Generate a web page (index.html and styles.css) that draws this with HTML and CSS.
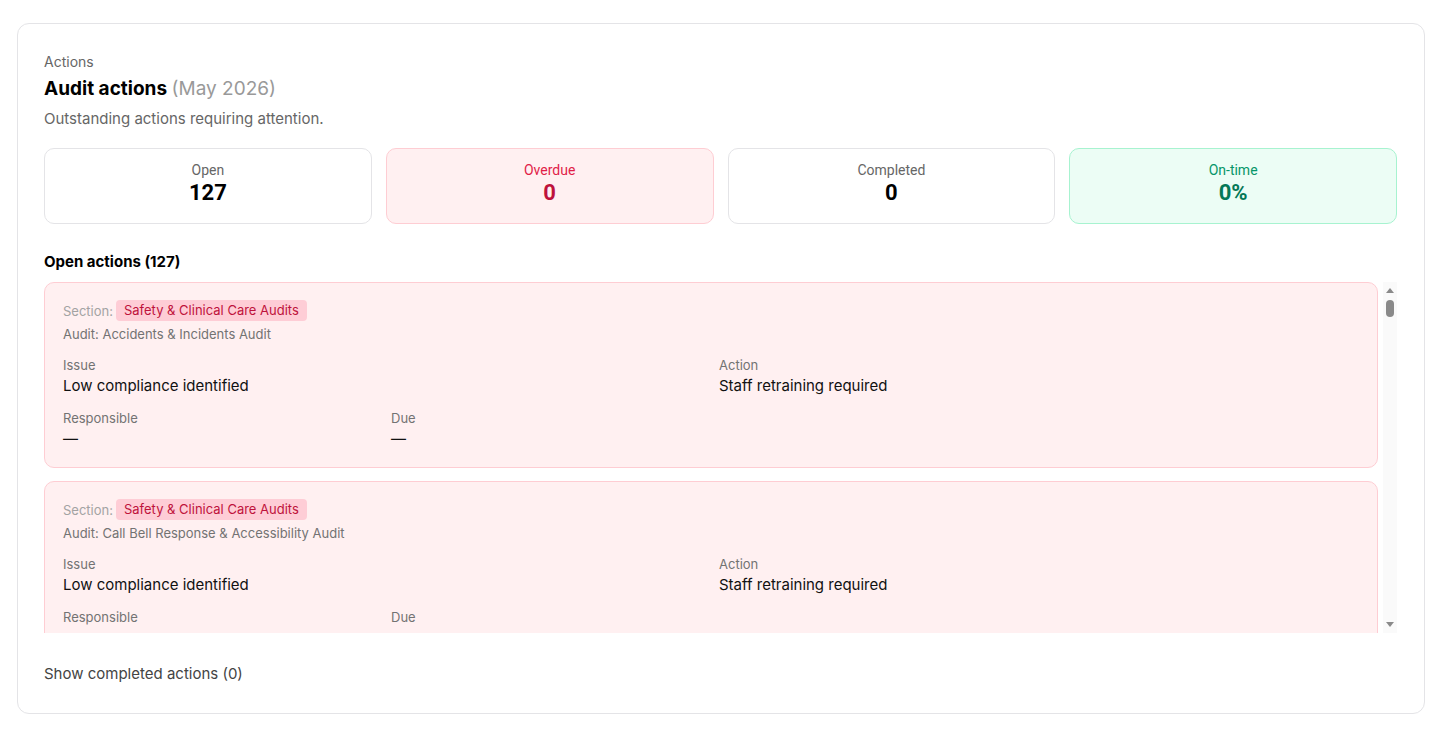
FILE: index.html
```html
<!DOCTYPE html>
<html lang="en">

<head>
    <meta charset="UTF-8">
    <meta name="viewport" content="width=device-width, initial-scale=1.0">
    <title>Audit actions</title>
    <link rel="stylesheet" href="styles.css">
</head>

<body>
    <div class="card">
        <div class="eyebrow">Actions</div>
        <h2 class="title">Audit actions <span class="period">(May 2026)</span></h2>
        <p class="subtitle">Outstanding actions requiring attention.</p>

        <div class="stats">
            <div class="stat">
                <div class="stat-label">Open</div>
                <div class="stat-value">127</div>
            </div>
            <div class="stat overdue">
                <div class="stat-label">Overdue</div>
                <div class="stat-value">0</div>
            </div>
            <div class="stat">
                <div class="stat-label">Completed</div>
                <div class="stat-value">0</div>
            </div>
            <div class="stat ontime">
                <div class="stat-label">On-time</div>
                <div class="stat-value">0%</div>
            </div>
        </div>

        <h3 class="list-title">Open actions (127)</h3>

        <div class="list-wrap">
            <div class="list">
                <div class="item">
                    <div class="section-row">
                        <span class="muted">Section:</span>
                        <span class="badge">Safety &amp; Clinical Care Audits</span>
                    </div>
                    <div class="audit">Audit: Accidents &amp; Incidents Audit</div>
                    <div class="grid-2">
                        <div>
                            <div class="field-label">Issue</div>
                            <div class="field-value">Low compliance identified</div>
                        </div>
                        <div>
                            <div class="field-label">Action</div>
                            <div class="field-value">Staff retraining required</div>
                        </div>
                    </div>
                    <div class="grid-4">
                        <div>
                            <div class="field-label">Responsible</div>
                            <div class="field-value">—</div>
                        </div>
                        <div>
                            <div class="field-label">Due</div>
                            <div class="field-value">—</div>
                        </div>
                    </div>
                </div>

                <div class="item">
                    <div class="section-row">
                        <span class="muted">Section:</span>
                        <span class="badge">Safety &amp; Clinical Care Audits</span>
                    </div>
                    <div class="audit">Audit: Call Bell Response &amp; Accessibility Audit</div>
                    <div class="grid-2">
                        <div>
                            <div class="field-label">Issue</div>
                            <div class="field-value">Low compliance identified</div>
                        </div>
                        <div>
                            <div class="field-label">Action</div>
                            <div class="field-value">Staff retraining required</div>
                        </div>
                    </div>
                    <div class="grid-4">
                        <div>
                            <div class="field-label">Responsible</div>
                            <div class="field-value">—</div>
                        </div>
                        <div>
                            <div class="field-label">Due</div>
                            <div class="field-value">—</div>
                        </div>
                    </div>
                </div>
            </div>

            <!-- scrollbar for the action list -->
            <div class="scrollbar">
                <span class="arrow up"></span>
                <span class="thumb"></span>
                <span class="spacer"></span>
                <span class="arrow down"></span>
            </div>
        </div>

        <button class="toggle">Show completed actions (0)</button>
    </div>
</body>

</html>
```

FILE: styles.css
```css
body {
    font-family: Inter, "Noto Sans", sans-serif;
    margin: 0;
    padding: 23px 25px 18px 17px;
    color: #111;
    background: #fff;
}

.card {
    border: 1px solid #e4e4e7;
    border-radius: 12px;
    padding: 27px 27px 29px 26px;
}

.eyebrow {
    font-size: 14px;
    color: #666;
    line-height: 20px;
    margin-top: 1px;
}

.title {
    font-size: 19px;
    font-weight: 700;
    margin: 4px 0 0;
    line-height: 26px;
    color: #000;
}

.period {
    font-weight: 400;
    color: #999;
}

.subtitle {
    font-size: 15px;
    color: #666;
    margin: 7px 0 0;
    line-height: 20px;
}

.stats {
    display: grid;
    grid-template-columns: repeat(4, 1fr);
    gap: 14px;
    margin-top: 19px;
}

.stat {
    border: 1px solid #e4e4e7;
    border-radius: 10px;
    padding-top: 13px;
    box-sizing: border-box;
    height: 76px;
    display: flex;
    flex-direction: column;
    align-items: center;
    font-family: Roboto, sans-serif;
}

.stat-label {
    font-size: 14px;
    color: #666;
    line-height: 16px;
}

.stat-value {
    font-size: 22px;
    font-weight: 700;
    line-height: 28px;
    margin-top: 1px;
    color: #000;
}

.stat.overdue {
    background: #fff0f1;
    border-color: #fecdd3;
}

.stat.overdue .stat-label {
    color: #e11d48;
}

.stat.overdue .stat-value {
    color: #be123c;
}

.stat.ontime {
    background: #ecfdf5;
    border-color: #a7f3d0;
}

.stat.ontime .stat-label {
    color: #059669;
}

.stat.ontime .stat-value {
    color: #047857;
}

.list-title {
    font-size: 15px;
    font-weight: 700;
    margin: 27px 0 9px;
    line-height: 22px;
    color: #000;
}

.list-wrap {
    display: flex;
    gap: 5px;
    height: 351px;
}

.list {
    flex: 1;
    overflow: hidden;
    display: flex;
    flex-direction: column;
    gap: 13px;
}

.scrollbar {
    width: 14px;
    background: #fafafa;
    display: flex;
    flex-direction: column;
    align-items: center;
}

.arrow {
    width: 0;
    height: 0;
    border-left: 4px solid transparent;
    border-right: 4px solid transparent;
}

.arrow.up {
    border-bottom: 5px solid #8a8a8a;
    margin-top: 6px;
}

.arrow.down {
    border-top: 5px solid #8a8a8a;
    margin-bottom: 6px;
}

.thumb {
    width: 8px;
    height: 17px;
    border-radius: 4px;
    background: #8a8a8a;
    margin-top: 7px;
}

.spacer {
    flex: 1;
}

.item {
    flex-shrink: 0;
    background: #fff0f1;
    border: 1px solid #fecdd3;
    border-radius: 10px;
    padding: 17px 18px 17px;
}

.section-row {
    display: flex;
    align-items: center;
    gap: 3px;
    font-size: 13px;
}

.muted {
    color: #a3a3a3;
}

.badge {
    background: #fecdd6;
    color: #be123c;
    border-radius: 4px;
    padding: 2px 8px;
    font-size: 13px;
    line-height: 17px;
}

.audit {
    font-size: 13px;
    color: #737373;
    margin-top: 4px;
    line-height: 18px;
}

.grid-2 {
    display: grid;
    grid-template-columns: repeat(2, 1fr);
    gap: 16px;
    margin-top: 13px;
}

.grid-4 {
    display: grid;
    grid-template-columns: repeat(4, 1fr);
    gap: 16px;
    margin-top: 12px;
}

.field-label {
    font-size: 13px;
    color: #737373;
    line-height: 18px;
}

.field-value {
    font-size: 15px;
    color: #111;
    line-height: 22px;
    margin-top: 1px;
}

.toggle {
    display: block;
    background: none;
    border: none;
    padding: 0;
    margin-top: 31px;
    font-family: inherit;
    font-size: 15px;
    color: #444;
    line-height: 20px;
    cursor: pointer;
}
```
